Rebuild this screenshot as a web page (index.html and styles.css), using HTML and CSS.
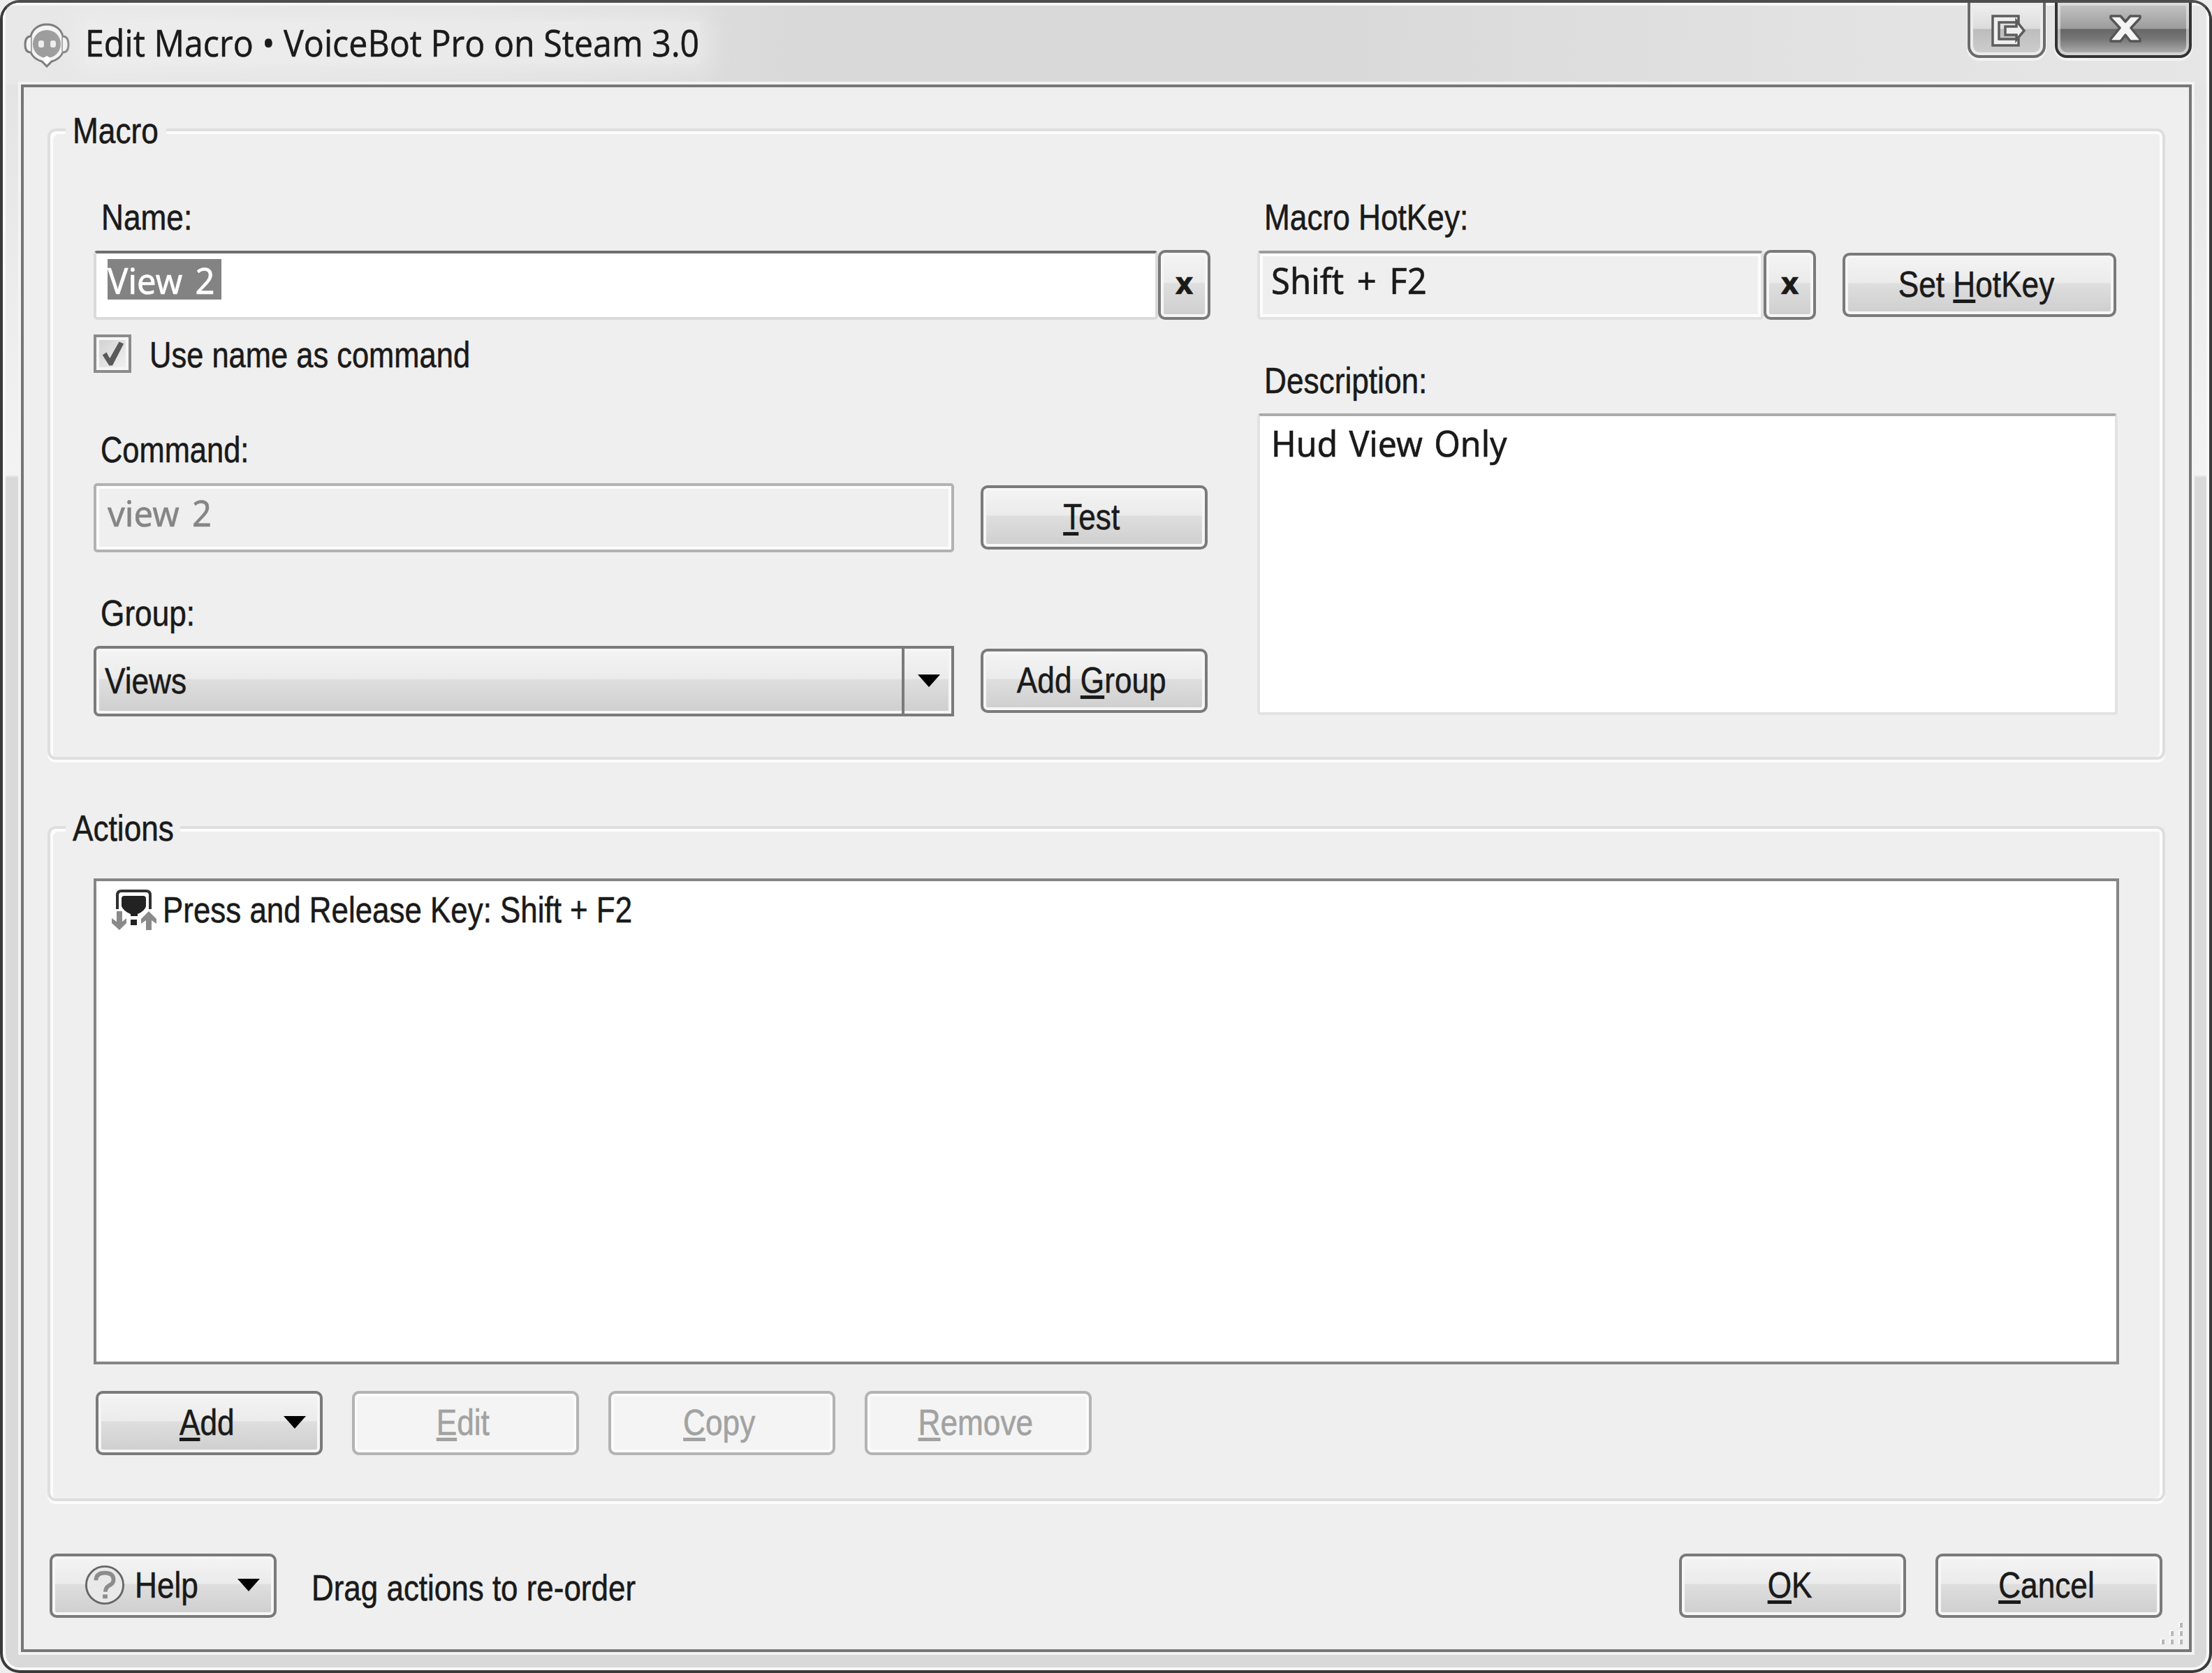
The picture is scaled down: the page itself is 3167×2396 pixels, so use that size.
FILE: index.html
```html
<!DOCTYPE html>
<html lang="en">
  <head>
    <meta charset="UTF-8" />
    <meta name="viewport" content="width=device-width, initial-scale=1.0" />
    <title>Edit Macro • VoiceBot Pro on Steam 3.0</title>
    <link rel="stylesheet" href="styles.css">
  </head>

  <body>
    <div class="window">
      <header class="titlebar">
        <svg class="app-icon" viewBox="0 0 66 64">
          <path d="M33 2C20 2 12 10 10 19C4 19 2 24 2 31C2 38 4 42 10 42C13 49 19 53 26 55L33 62L40 55C47 53 53 49 56 42C62 42 64 38 64 31C64 24 62 19 56 19C54 10 46 2 33 2Z" fill="#f4f4f4" stroke="#7d7d7d" stroke-width="3" />
          <ellipse cx="33" cy="30" rx="20" ry="20" fill="#9d9d9d" />
          <path d="M11 20V41M55 20V41" stroke="#a5a5a5" stroke-width="2" />
          <rect x="21" y="25" width="8" height="10" rx="3" fill="#eee" />
          <rect x="38" y="25" width="8" height="10" rx="3" fill="#eee" />
          <path d="M28 50L33 47L38 50L33 59Z" fill="#fff" />
        </svg>
        <h1 class="title"><span class="title-text">Edit Macro • VoiceBot Pro on Steam 3.0</span></h1>
        <div class="caption-buttons">
          <button class="caption-btn move-btn">
            <svg class="move-icon" viewBox="0 0 52 48">
              <path d="M41 3H4V45H41V36H13V12H41Z" fill="#efefef" stroke="#5c5c5c" stroke-width="3.5" />
              <path d="M22 18H38V10L49 24L38 37V30H22Z" fill="#efefef" stroke="#5c5c5c" stroke-width="3.5" />
            </svg>
          </button>
          <button class="caption-btn close-btn">
            <svg class="close-icon" viewBox="0 0 48 42">
              <path d="M3 3H17L24 11L31 3H45V6L32 20L45 36V39H31L24 30L17 39H3V36L16 20L3 6Z" fill="#f4f4f4" stroke="#555" stroke-width="3.5" stroke-linejoin="round" />
            </svg>
          </button>
        </div>
      </header>

      <main class="client">
        <section class="group group-macro">
          <h2 class="legend legend-macro"><span class="txt">Macro</span></h2>
          <div class="col-left">
            <div class="label label-name"><span class="txt">Name:</span></div>
            <div class="row name-row">
              <div class="field field-name"><span class="selected"><span class="value">View 2</span></span></div>
              <button class="btn btn-clear">x</button>
            </div>
            <div class="check-row">
              <span class="checkbox">
                <svg class="check-icon" viewBox="0 0 40 40">
                  <path d="M5 22L11 18L16 27L30 2L37 5L20 38H15Z" fill="#5a5a5a" />
                </svg>
              </span>
              <span class="txt check-text">Use name as command</span>
            </div>
            <div class="label label-command"><span class="txt">Command:</span></div>
            <div class="row">
              <div class="field field-disabled"><span class="value">view 2</span></div>
              <button class="btn"><span class="txt mid"><u>T</u>est</span></button>
            </div>
            <div class="label label-next"><span class="txt">Group:</span></div>
            <div class="row">
              <div class="combo">
                <span class="combo-text"><span class="txt">Views</span></span>
                <span class="combo-arrow"><i class="arrow"></i></span>
              </div>
              <button class="btn"><span class="txt mid">Add <u>G</u>roup</span></button>
            </div>
          </div>
          <div class="col-right">
            <div class="label"><span class="txt">Macro HotKey:</span></div>
            <div class="row name-row">
              <div class="field field-readonly"><span class="value">Shift + F2</span></div>
              <button class="btn btn-clear">x</button>
              <button class="btn btn-hotkey"><span class="txt mid">Set <u>H</u>otKey</span></button>
            </div>
            <div class="label label-next"><span class="txt">Description:</span></div>
            <div class="field field-area"><span class="value value-area">Hud View Only</span></div>
          </div>
        </section>

        <section class="group group-actions">
          <h2 class="legend legend-actions"><span class="txt">Actions</span></h2>
          <div class="list">
            <div class="list-item">
              <svg class="key-icon" viewBox="0 0 66 59">
                <path d="M9 28V8Q9 2 15 2H50Q56 2 56 8V28" fill="none" stroke="#303030" stroke-width="4" />
                <path d="M19 9H46Q50 9 50 13V24Q48 31 38 35V38H28V35Q18 31 15 24V13Q15 9 19 9Z" fill="#222" />
                <rect x="28" y="43" width="9" height="8" fill="#222" />
                <path d="M8 31H16V46L22 41V48L12 58L1 48V41L8 46Z" fill="#8a8a8a" />
                <path d="M50 58H58V44L65 49V42L54 31L43 42V49L50 44Z" fill="#8a8a8a" />
              </svg>
              <span class="txt item-text">Press and Release Key: Shift + F2</span>
            </div>
          </div>
          <div class="action-buttons">
            <button class="btn btn-menu"><span class="txt mid"><u>A</u>dd</span><i class="arrow"></i></button>
            <button class="btn disabled"><span class="txt mid"><u>E</u>dit</span></button>
            <button class="btn disabled"><span class="txt mid"><u>C</u>opy</span></button>
            <button class="btn disabled"><span class="txt mid"><u>R</u>emove</span></button>
          </div>
        </section>

        <footer class="footer">
          <button class="btn btn-help">
            <svg class="help-icon" viewBox="0 0 60 60">
              <circle cx="30" cy="30" r="27.5" fill="#e9e9e9" stroke="#666" stroke-width="3" />
              <path d="M17 23Q17 12 30 12Q43 12 43 22Q43 28 36 31Q31 34 31 40" fill="none" stroke="#8c8c8c" stroke-width="6" />
              <rect x="27" y="44" width="7" height="6" fill="#8c8c8c" />
            </svg>
            <span class="txt help-text">Help</span>
            <i class="arrow"></i>
          </button>
          <span class="txt hint">Drag actions to re-order</span>
          <button class="btn btn-ok"><span class="txt mid"><u>O</u>K</span></button>
          <button class="btn"><span class="txt mid"><u>C</u>ancel</span></button>
        </footer>

        <svg class="grip" viewBox="0 0 36 34">
          <path d="M28 2h5v7h-5zM15 14h5v7h-5zM28 14h5v7h-5zM2 26h5v7h-5zM15 26h5v7h-5zM28 26h5v7h-5z" fill="#fff" />
          <path d="M30 3h4v7h-4zM17 15h4v7h-4zM30 15h4v7h-4zM4 27h4v7h-4zM17 27h4v7h-4zM30 27h4v7h-4z" fill="#b8b8b8" />
        </svg>
      </main>
    </div>
  </body>
</html>
```

FILE: styles.css
```css
*,
*:before,
*:after {
  box-sizing: border-box;
}

body {
  margin: 0;
  background-color: #eee;
  color: #1a1a1a;
  font-family: "Liberation Sans", Arial, sans-serif;
  font-size: 52px;
  line-height: 60px;
  -webkit-text-stroke: 0.6px;
}

h1,
h2 {
  margin: 0;
  font-size: inherit;
  font-weight: normal;
}

.window {
  width: 3167px;
  height: 2396px;
  border: 4px solid #3a3a3a;
  border-top-color: #4d4d4d;
  border-radius: 28px;
  background: linear-gradient(#e4e4e4 117px, #f3f3f3 676px, #d9d9d9 680px);
  box-shadow: inset 0 0 0 4px #f8f8f8;
  overflow: hidden;
}

/* Title bar */

.titlebar {
  display: flex;
  height: 117px;
  padding-left: 30px;
  background: linear-gradient(90deg, #e8e8e8, #e2e2e2 700px, #d9d9d9 1150px, #d9d9d9 1900px, #e3e3e3 2700px, #e6e6e6);
  box-shadow: inset 4px 4px 0 #f8f8f8, inset -4px 0 0 #f8f8f8;
}

.app-icon {
  width: 66px;
  height: 64px;
  margin-top: 29px;
}

.title {
  margin-left: 22px;
  margin-top: 27px;
  width: 880px;
  height: 60px;
  font-family: "Open Sans", "Noto Sans", sans-serif;
  font-size: 53px;
  white-space: nowrap;
  background-color: rgba(240, 240, 240, 0.6);
  box-shadow: 0 0 36px 14px rgba(240, 240, 240, 0.6);
}

.title-text {
  display: inline-block;
  transform: scaleX(0.912);
  transform-origin: left;
}

.caption-buttons {
  display: flex;
  gap: 13px;
  margin-left: auto;
  margin-right: 25px;
}

.caption-btn {
  display: flex;
  justify-content: center;
  height: 79px;
  padding: 0;
  border: 4px solid #6b6b6b;
  border-top: 0;
  border-radius: 0 0 17px 17px;
}

.move-btn {
  width: 112px;
  padding-top: 16px;
  padding-left: 4px;
  background: linear-gradient(#f0f0f0, #dcdcdc 37px, #bcbcbc 38px, #cfcfcf);
  box-shadow: inset 0 0 0 4px #ececec, 0 3px 0 1px #f2f2f2;
}

.close-btn {
  width: 196px;
  padding-top: 16px;
  padding-left: 6px;
  border-color: #333;
  background: linear-gradient(#c6c6c6, #9c9c9c 37px, #666 38px, #777 52px, #b4b4b4);
  box-shadow: inset 0 0 0 4px rgba(235, 235, 235, 0.6), 0 3px 0 1px #f2f2f2;
}

.move-icon {
  width: 52px;
  height: 48px;
}

.close-icon {
  width: 48px;
  height: 42px;
}

/* Client area */

.client {
  position: relative;
  width: 3108px;
  height: 2245px;
  margin-left: 26px;
  padding: 59px 34px 0;
  border: 4px solid #777;
  background-color: #efefef;
  box-shadow: 0 0 0 4px #f3f3f3;
}

.group {
  position: relative;
  padding-left: 62px;
  border: 4px solid #dedede;
  border-radius: 12px;
  box-shadow: inset 4px 4px 0 #fcfcfc, inset -4px 0 0 #fcfcfc, 0 4px 0 #fcfcfc;
}

.group-macro {
  display: flex;
  gap: 67px;
  height: 904px;
  padding-top: 93px;
}

.group-actions {
  height: 967px;
  margin-top: 95px;
  padding-top: 71px;
}

.legend {
  position: absolute;
  left: 22px;
  top: -31px;
  padding-left: 10px;
  background-color: #efefef;
}

.legend-macro {
  width: 144px;
}

.legend-actions {
  width: 164px;
}

/* Narrow UI text */

.txt {
  display: inline-block;
  white-space: pre;
  transform: scaleX(0.85);
  transform-origin: left;
}

.txt.mid {
  margin-right: 8px;
  transform-origin: center;
}

u {
  text-decoration-thickness: 5px;
  text-underline-offset: 4px;
  text-decoration-skip-ink: none;
}

.col-left {
  width: 1599px;
}

.col-right {
  width: 1232px;
}

.label {
  height: 60px;
  margin-bottom: 17px;
  padding-left: 10px;
}

.label-name {
  padding-left: 11px;
}

.label-command {
  margin-top: 81px;
}

.label-command .txt {
  transform: scaleX(0.835);
}

.label-next {
  margin-top: 57px;
}

.row {
  display: flex;
  align-items: center;
  gap: 38px;
  height: 100px;
}

.name-row {
  gap: 0;
}

.field {
  height: 99px;
  padding: 8px 16px;
  border: 4px solid #dadada;
  border-radius: 5px;
  background-color: #fff;
}

.field-name {
  flex: 1;
  padding-top: 8px;
  border-top-color: #6e6e6e;
}

.selected {
  display: block;
  width: 163px;
  height: 58px;
  background-color: #838383;
  color: #fff;
}

.value {
  display: inline-block;
  font-family: "Noto Sans", "Open Sans", sans-serif;
  font-size: 51px;
  line-height: 60px;
  white-space: pre;
  transform: scaleX(0.96);
  transform-origin: left;
  word-spacing: 6px;
}

.value-area {
  transform: scaleX(0.945);
  word-spacing: 4px;
}

.field-disabled {
  width: 1232px;
  border-color: #b2b2b2;
  background-color: #efefef;
  box-shadow: inset 0 0 0 4px #fcfcfc;
  color: #858585;
}

.field-readonly {
  width: 725px;
  border-color: #9c9c9c #e2e2e2 #e2e2e2;
  background-color: #efefef;
  box-shadow: inset 0 0 0 4px #fcfcfc;
}

.field-area {
  height: 432px;
  border-color: #ababab #e2e2e2 #e2e2e2;
}

/* Buttons */

.btn {
  display: flex;
  flex: none;
  align-items: center;
  justify-content: center;
  width: 325px;
  height: 92px;
  padding: 0 0 3px;
  border: 4px solid #7a7a7a;
  border-radius: 10px;
  background: linear-gradient(#f4f4f4, #ebebeb 46%, #dedede 48%, #cecece);
  box-shadow: inset 0 0 0 4px #f6f6f6;
  color: inherit;
  font: inherit;
}

.btn-clear {
  width: 75px;
  height: 100px;
  padding-bottom: 5px;
  font-family: "DejaVu Sans Condensed", "DejaVu Sans", sans-serif;
  font-size: 45px;
  font-weight: bold;
}

.btn-hotkey {
  width: 392px;
  margin-left: 38px;
}

.btn.disabled {
  border-color: #b3b3b3;
  background: #f4f4f4;
  box-shadow: inset 0 0 0 4px #fbfbfb;
  color: #a2a2a2;
}

.arrow {
  width: 0;
  height: 0;
  border: 16px solid transparent;
  border-top: 18px solid #000;
  border-bottom: 0;
}

.check-row {
  display: flex;
  align-items: center;
  gap: 26px;
  height: 55px;
  margin-top: 21px;
  margin-bottom: -1px;
}

.checkbox {
  width: 54px;
  height: 55px;
  padding: 4px;
  border: 4px solid #8b8b8b;
  background: linear-gradient(135deg, #cfcfcf, #f4f4f4);
  box-shadow: inset 0 0 0 4px #f6f6f6;
}

.check-icon {
  display: block;
  width: 38px;
  height: 39px;
}

.check-text {
  padding-top: 2px;
  transform: scaleX(0.836);
}

.combo {
  display: flex;
  width: 1232px;
  height: 101px;
  border: 4px solid #7a7a7a;
  border-radius: 8px 0 0 8px;
  background: linear-gradient(#f4f4f4, #ebebeb 46%, #dedede 48%, #cecece);
  box-shadow: inset 0 0 0 4px #f6f6f6;
}

.combo-text {
  flex: 1;
  padding: 16px 0 0 12px;
}

.combo-arrow {
  display: flex;
  align-items: center;
  justify-content: center;
  width: 71px;
  padding-left: 3px;
  border-left: 4px solid #7a7a7a;
}

.list {
  width: 2900px;
  height: 696px;
  padding: 11px 21px;
  border: 4px solid #858585;
  background-color: #fff;
}

.list-item {
  display: flex;
  gap: 8px;
}

.key-icon {
  width: 66px;
  height: 59px;
  margin-top: 1px;
}

.item-text {
  transform: scaleX(0.844);
}

.action-buttons {
  display: flex;
  gap: 42px;
  margin-top: 38px;
  padding-left: 3px;
}

.btn-menu {
  justify-content: flex-end;
  gap: 55px;
  padding-right: 20px;
}

/* Footer */

.footer {
  display: flex;
  align-items: center;
  height: 92px;
  margin-top: 75px;
  padding-left: 3px;
  padding-right: 4px;
}

.btn-help {
  justify-content: flex-start;
  padding-left: 46px;
}

.help-icon {
  width: 58px;
  height: 60px;
}

.help-text {
  width: 147px;
  margin-left: 14px;
  text-align: left;
}

.hint {
  margin-left: 50px;
  padding-top: 6px;
  transform: scaleX(0.845);
}

.btn-ok {
  margin-left: auto;
  margin-right: 42px;
}

.grip {
  position: absolute;
  right: 7px;
  bottom: 7px;
  width: 36px;
  height: 34px;
}
```
